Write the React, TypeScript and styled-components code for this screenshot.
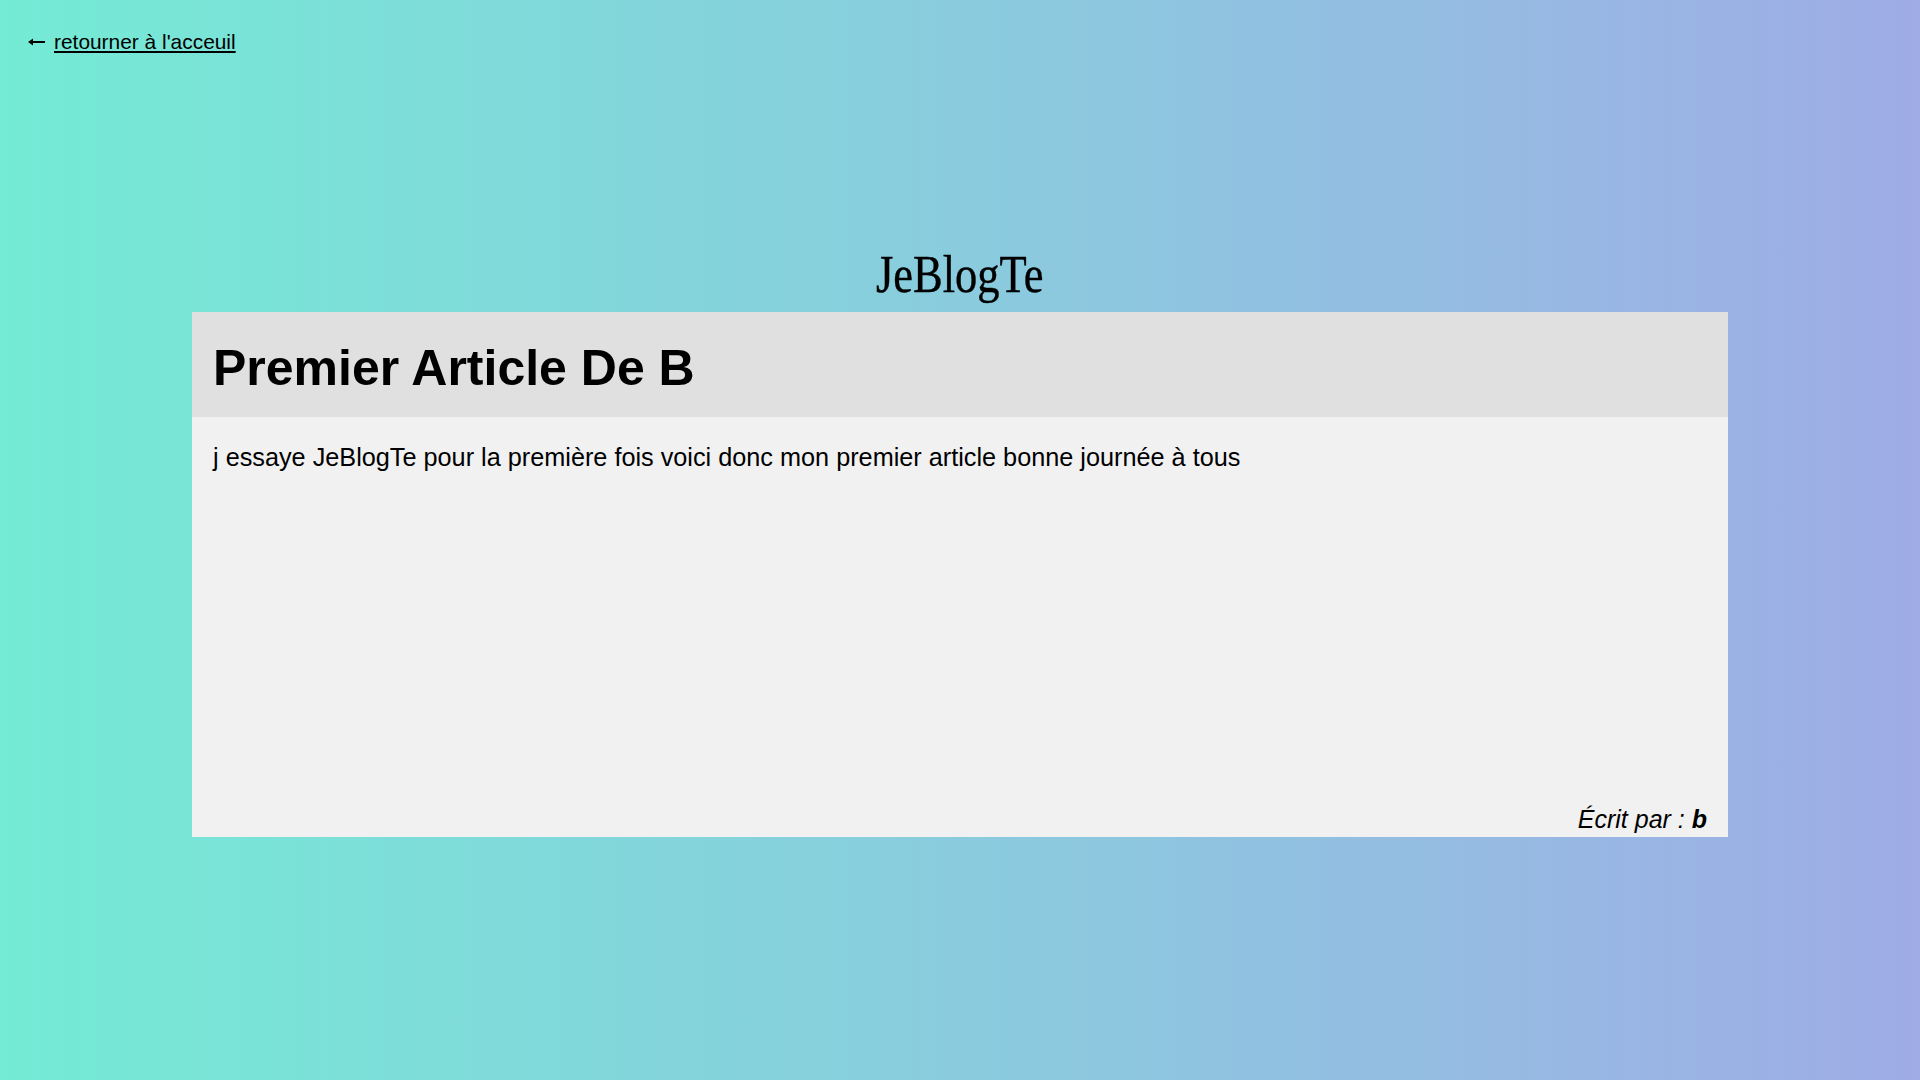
import React from "react";
import styled, { createGlobalStyle } from "styled-components";

const GlobalStyle = createGlobalStyle`
  html, body {
    margin: 0;
    padding: 0;
    min-height: 100vh;
  }
  body {
    font-family: "Liberation Sans", Arial, sans-serif;
    background-image: linear-gradient(90deg, #74ebd5 0%, #9face6 100%);
    background-attachment: fixed;
    color: #000;
  }
  #root {
    min-height: 100vh;
  }
`;

const Page = styled.div`
  min-height: 100vh;
  display: flex;
  flex-direction: column;
`;

const Nav = styled.nav`
  display: flex;
  align-items: center;
  gap: 9px;
  padding: 30px 0 0 28px;
  height: 24px;
`;

const BackLink = styled.a`
  font-size: 20.9px;
  line-height: 24px;
  color: #000;
  text-decoration: underline;
  text-underline-offset: 2px;
  cursor: pointer;
`;

const Main = styled.main`
  width: 80%;
  margin: 0 auto;
  display: flex;
  flex-direction: column;
  align-items: stretch;
`;

const SiteTitle = styled.h1`
  margin: 196px 0 14px;
  text-align: center;
  font-family: "Liberation Serif", "Times New Roman", serif;
  font-weight: 400;
  font-size: 53px;
  line-height: 48px;
`;

const TitleText = styled.span`
  display: inline-block;
  transform: scaleX(0.84);
  -webkit-text-stroke: 0.4px #000;
`;

const Card = styled.article`
  display: flex;
  flex-direction: column;
`;

const CardHeader = styled.header`
  background: #e0e0e0;
  padding: 28px 21px 20px;
`;

const ArticleTitle = styled.h2`
  margin: 0;
  font-size: 50px;
  line-height: 57px;
  font-weight: 700;
`;

const CardBody = styled.div`
  background: #f1f1f1;
  height: 420px;
  box-sizing: border-box;
  padding: 26px 21px 3px;
  display: flex;
  flex-direction: column;
  justify-content: space-between;
`;

const Content = styled.p`
  margin: 0;
  font-size: 25.25px;
  line-height: 29px;
`;

const Author = styled.p`
  margin: 0;
  font-size: 25px;
  line-height: 29px;
  font-style: italic;
  text-align: right;
`;

const ArrowIcon = () => (
  <svg width="17" height="8" viewBox="0 0 17 8" aria-hidden="true">
    <path d="M0 4 L5 0.5 L5 3 L17 3 L17 5 L5 5 L5 7.5 Z" fill="#000" />
  </svg>
);

export default function App() {
  return (
    <>
      <GlobalStyle />
      <Page>
        <Nav>
          <ArrowIcon />
          <BackLink>retourner à l'acceuil</BackLink>
        </Nav>
        <Main>
          <SiteTitle>
            <TitleText>JeBlogTe</TitleText>
          </SiteTitle>
          <Card>
            <CardHeader>
              <ArticleTitle>Premier Article De B</ArticleTitle>
            </CardHeader>
            <CardBody>
              <Content>
                j essaye JeBlogTe pour la première fois voici donc mon premier article bonne journée à tous
              </Content>
              <Author>
                Écrit par : <b>b</b>
              </Author>
            </CardBody>
          </Card>
        </Main>
      </Page>
    </>
  );
}
